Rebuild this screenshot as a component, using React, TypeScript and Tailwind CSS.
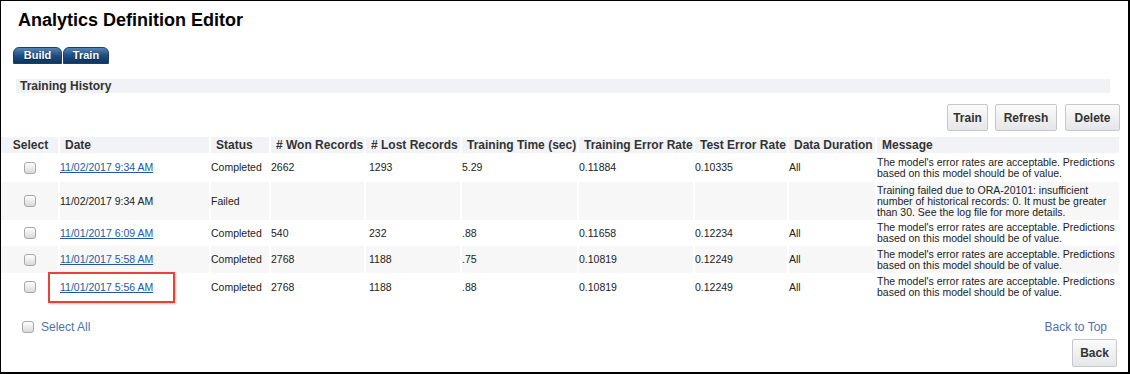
import React from 'react';

const cols = [58, 151, 60, 95, 96, 117, 116, 94, 88, 243];
const heads = ['Select', 'Date', 'Status', '# Won Records', '# Lost Records', 'Training Time (sec)', 'Training Error Rate', 'Test Error Rate', 'Data Duration', 'Message'];

const okMsg = "The model's error rates are acceptable. Predictions based on this model should be of value.";

const rows = [
  { date: '11/02/2017 9:34 AM', link: true, status: 'Completed', won: '2662', lost: '1293', time: '5.29', tre: '0.11884', te: '0.10335', dur: 'All', msg: okMsg, h: 'h-[29px]' },
  { date: '11/02/2017 9:34 AM', link: false, status: 'Failed', won: '', lost: '', time: '', tre: '', te: '', dur: '', msg: 'Training failed due to ORA-20101: insufficient number of historical records: 0. It must be greater than 30. See the log file for more details.', h: 'h-[38px]' },
  { date: '11/01/2017 6:09 AM', link: true, status: 'Completed', won: '540', lost: '232', time: '.88', tre: '0.11658', te: '0.12234', dur: 'All', msg: okMsg, h: 'h-[26px]' },
  { date: '11/01/2017 5:58 AM', link: true, status: 'Completed', won: '2768', lost: '1188', time: '.75', tre: '0.10819', te: '0.12249', dur: 'All', msg: okMsg, h: 'h-[27px]' },
  { date: '11/01/2017 5:56 AM', link: true, status: 'Completed', won: '2768', lost: '1188', time: '.88', tre: '0.10819', te: '0.12249', dur: 'All', msg: okMsg, h: 'h-[28px]', marked: true },
];

const Checkbox = () => (
  <span className="inline-block w-[12px] h-[12px] rounded-[3px] border border-[#a8a8a8] bg-gradient-to-b from-[#ffffff] to-[#d9d9d9] align-middle" />
);

const Btn = ({ label, w }: { label: string; w: string }) => (
  <button className={`${w} h-[27px] rounded-[2px] border border-[#c6c8cc] bg-gradient-to-b from-[#fbfbfb] to-[#e5e6e8] text-[12px] font-bold text-[#333]`}>
    {label}
  </button>
);

const Tab = ({ label, w }: { label: string; w: string }) => (
  <div className={`${w} h-[17px] rounded-t-[6px] border border-[#1d3f66] bg-gradient-to-b from-[#5584b3] via-[#1f4e80] to-[#0c3562] text-white text-[11px] font-bold leading-[15px] text-center [text-shadow:0_1px_1px_#0a1f3a]`}>
    {label}
  </div>
);

export default function App() {
  return (
    <div className="w-[1130px] h-[374px] border-l border-t border-r-2 border-b-2 border-black bg-white overflow-hidden text-[#222] font-['Liberation_Sans',Arial,sans-serif]">
      <h1 className="ml-[17px] mt-[9px] text-[18px] leading-[21px] font-bold text-black">Analytics Definition Editor</h1>

      <div className="flex gap-[1px] ml-[12px] mt-[16px]">
        <Tab label="Build" w="w-[49px]" />
        <Tab label="Train" w="w-[46px]" />
      </div>

      <div className="ml-[15px] mr-[18px] mt-[15px] h-[14px] bg-[#f1f2f5] pl-[4px] text-[12px] leading-[14px] font-bold text-[#333]">
        Training History
      </div>

      <div className="flex justify-end mr-[8px] mt-[11px]">
        <Btn label="Train" w="w-[41px]" />
        <div className="ml-[7px]"><Btn label="Refresh" w="w-[62px]" /></div>
        <div className="ml-[8px]"><Btn label="Delete" w="w-[55px]" /></div>
      </div>

      <table className="table-fixed border-collapse mt-[6px] w-[1118px]">
        <colgroup>
          {cols.map((w, i) => (
            <col key={i} style={{ width: w }} />
          ))}
        </colgroup>
        <thead>
          <tr className="h-[16px] bg-[#f2f3f6]">
            {heads.map((h, i) => (
              <th
                key={h}
                className={`p-0 text-[12px] leading-[16px] font-bold text-[#333] whitespace-nowrap ${i === 0 ? 'text-center pl-[2px]' : 'text-left pl-[5px] border-l-2 border-white'}`}
              >
                {h}
              </th>
            ))}
          </tr>
        </thead>
        <tbody className="text-[10.5px] leading-[11px]">
          {rows.map((r, i) => (
            <tr key={i} className={`${r.h} ${i % 2 === 1 ? 'bg-[#f7f7f7]' : 'bg-white'}`}>
              <td className="p-0 text-center align-middle"><Checkbox /></td>
              <td className="relative p-0 border-l-2 border-white align-middle">
                {r.link ? (
                  <a className="text-[#2559a3] underline">{r.date}</a>
                ) : (
                  <span>{r.date}</span>
                )}
                {r.marked && (
                  <div className="absolute left-[-12px] top-[-1px] w-[127px] h-[31px] border-2 border-[#e8413b] shadow-[1px_1px_2px_rgba(0,0,0,0.25)]" />
                )}
              </td>
              <td className="p-0 border-l-2 border-white align-middle">{r.status}</td>
              <td className="p-0 border-l-2 border-white align-middle">{r.won}</td>
              <td className="p-0 pl-[3px] border-l-2 border-white align-middle">{r.lost}</td>
              <td className="p-0 border-l-2 border-white align-middle">{r.time}</td>
              <td className="p-0 border-l-2 border-white align-middle">{r.tre}</td>
              <td className="p-0 border-l-2 border-white align-middle">{r.te}</td>
              <td className="p-0 border-l-2 border-white align-middle">{r.dur}</td>
              <td className="p-0 pr-[2px] border-l-2 border-white align-middle">{r.msg}</td>
            </tr>
          ))}
        </tbody>
      </table>

      <div className="flex justify-between items-center h-[16px] mt-[18px] ml-[21px] mr-[21px]">
        <div className="flex items-center gap-[7px]">
          <Checkbox />
          <span className="text-[12px] text-[#4f71aa]">Select All</span>
        </div>
        <span className="text-[12px] text-[#4f71aa]">Back to Top</span>
      </div>

      <div className="flex justify-end mr-[11px] mt-[4px]">
        <Btn label="Back" w="w-[45px] h-[28px]" />
      </div>
    </div>
  );
}
